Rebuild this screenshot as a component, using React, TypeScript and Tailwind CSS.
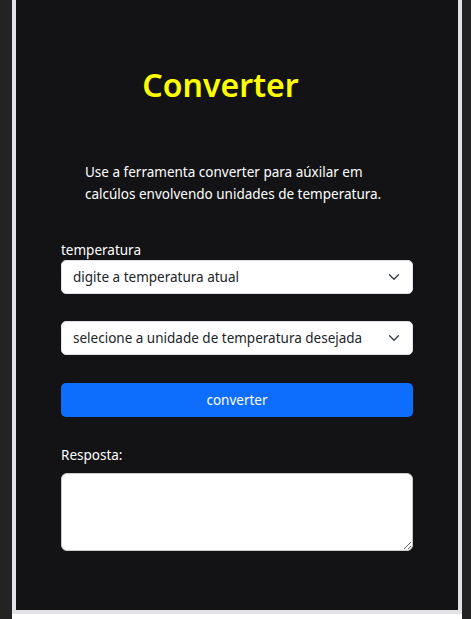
const font = { fontFamily: '"Noto Sans", "Open Sans", sans-serif' };

function FakeSelect({ text }: { text: string }) {
  return (
    <div className="flex h-[34px] items-center justify-between rounded-[5px] border border-[#dee2e6] bg-white pl-[11px] pr-[12px] text-[13.5px] text-[#212529]">
      <span>{text}</span>
      <svg width="12" height="12" viewBox="0 0 16 16" fill="none" className="text-[#343a40]">
        <path d="M2 5l6 6 6-6" stroke="currentColor" strokeWidth="1.7" strokeLinecap="round" strokeLinejoin="round" />
      </svg>
    </div>
  );
}

export default function App() {
  return (
    <div className="flex h-[619px] w-[471px] bg-[#232323]" style={font}>
      <div className="ml-[12px] w-[450px] bg-white">
        <div className="border-x-4 border-b-4 border-[#e3e2e6] bg-[#131315]">
          <div className="flex h-[610px] flex-col px-[45px]">
            <h1 className="mt-[61px] pr-[33px] text-center text-[32px] font-semibold leading-[48px] text-[#ffff00]">
              Converter
            </h1>
            <p className="mt-[52px] pl-[24px] text-[13.5px] leading-[22px] text-white">
              Use a ferramenta converter para aúxilar em
              <br />
              calcúlos envolvendo unidades de temperatura.
            </p>
            <label className="mt-[35px] text-[13.5px] leading-[20px] text-white">temperatura</label>
            <div>
              <FakeSelect text="digite a temperatura atual" />
            </div>
            <div className="mt-[27px]">
              <FakeSelect text="selecione a unidade de temperatura desejada" />
            </div>
            <button className="mt-[28px] h-[34px] rounded-[5px] bg-[#0d6efd] text-[13.5px] text-white">
              converter
            </button>
            <label className="mt-[28px] text-[13.5px] leading-[20px] text-white">Resposta:</label>
            <textarea className="mt-[8px] h-[78px] rounded-[6px] border border-[#c9c9c9] bg-white" />
          </div>
        </div>
      </div>
    </div>
  );
}
